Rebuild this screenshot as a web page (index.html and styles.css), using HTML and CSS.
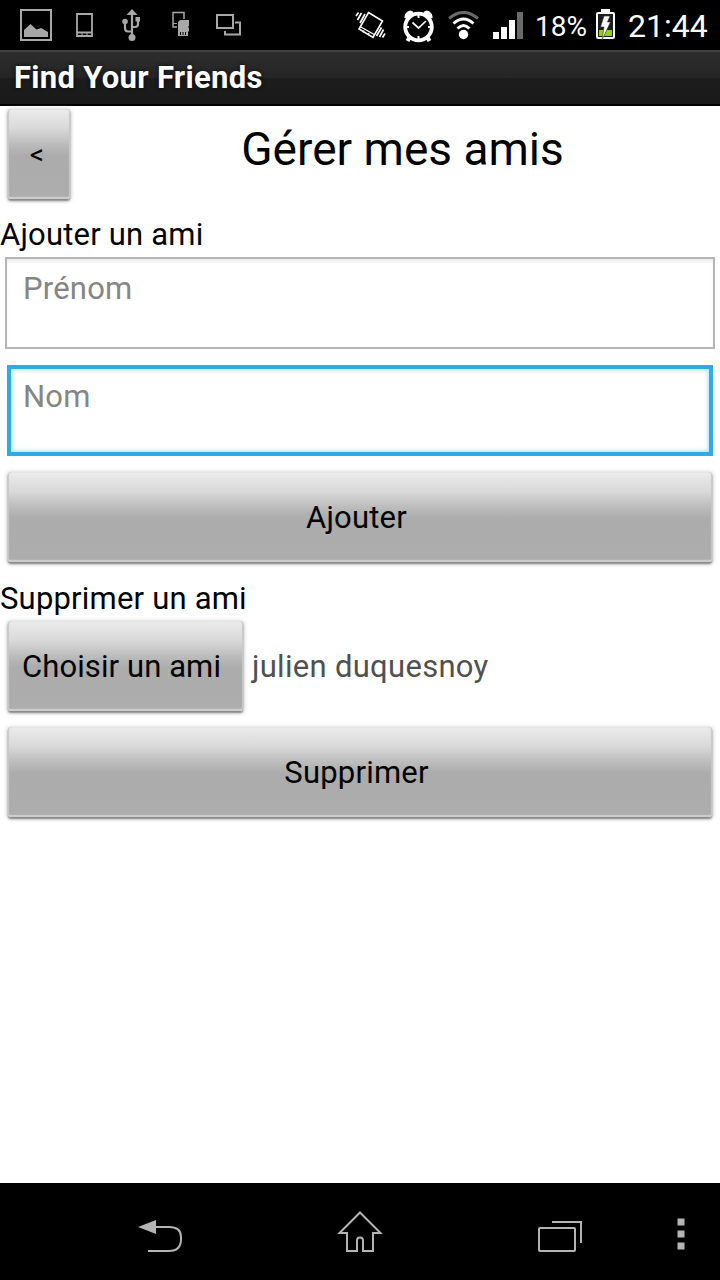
FILE: index.html
```
<!DOCTYPE html>
<html lang="fr">
<head>
    <meta charset="UTF-8">
    <meta name="viewport" content="width=device-width, initial-scale=1.0">
    <title>Find Your Friends</title>
    <link rel="stylesheet" href="styles.css">
</head>
<body>
    <div class="status-bar">
        <div class="notifications">
            <svg width="32" height="32" viewBox="0 0 32 32">
                <rect x="1" y="1" width="30" height="30" fill="none" stroke="#a8a8a8" stroke-width="2"/>
                <path d="M4 28V21L10.500 15L16.500 20.500L21 19L28 23V28Z" fill="#a8a8a8"/>
            </svg>
            <svg class="icon-phone" width="17" height="24" viewBox="0 0 17 24">
                <path d="M1 1H16V23H1ZM1 19.500H16" fill="none" stroke="#a8a8a8" stroke-width="1.800"/>
                <path d="M6 20V23M11 20V23" stroke="#a8a8a8"/>
            </svg>
            <svg class="icon-usb" width="19" height="33" viewBox="0 0 19 33">
                <path d="M10 6V28M3 13V19Q3 22.500 6 22.500H10M16 10V15Q16 18 13 18H10" fill="none" stroke="#a8a8a8" stroke-width="2.200"/>
                <path d="M4.500 6L10 0L15.500 6Z" fill="#a8a8a8"/>
                <circle cx="10" cy="28.500" r="3.500" fill="#a8a8a8"/>
                <circle cx="3" cy="12.500" r="2.800" fill="#a8a8a8"/>
                <rect x="13.500" y="8" width="4.500" height="4.500" fill="#a8a8a8"/>
            </svg>
            <svg class="icon-card" width="18" height="26" viewBox="0 0 18 26">
                <path d="M5 16H1V1.500H12V8" fill="none" stroke="#a8a8a8" stroke-width="1.500"/>
                <path d="M1 12.500H5" stroke="#a8a8a8"/>
                <path d="M8 9H17V15L16 16L17 17V20L16 21V25H6V11Z" fill="#a8a8a8"/>
                <path d="M8.500 21V24M11 21V24M13.500 21V24" stroke="#000"/>
            </svg>
            <svg class="icon-screens" width="25" height="22" viewBox="0 0 25 22">
                <path d="M1 1H17V14H1ZM19 8.500H24V20.500H9V17" fill="none" stroke="#a8a8a8" stroke-width="2"/>
            </svg>
        </div>
        <div class="system">
            <svg class="icon-vibrate" width="31" height="28" viewBox="0 0 31 28">
                <path d="M13.500 1.500L27.500 10L18 26.500L4 18Z" fill="none" stroke="#fff" stroke-width="1.600"/>
                <path d="M5 15.500L20 24M9 19.500L8 21.500M14 22L13 24" stroke="#fff" stroke-width="1.300"/>
                <path d="M1 5L3.500 1.500M2.500 9L6.500 2M5 12L10 3M30 22.500L27.500 26.500M28.500 18.500L24.500 26M26.500 16.500L21.500 25" stroke="#fff" stroke-width="1.700"/>
            </svg>
            <svg class="icon-alarm" width="31" height="33" viewBox="0 0 31 33">
                <path d="M1.500 8Q1 4 4 2Q7 -1 10.500 2L5 9ZM29.500 8Q30 4 27 2Q24 -1 20.500 2L26 9Z" fill="#fff"/>
                <path d="M6.500 27.500L4.500 31M24.500 27.500L26.500 31" stroke="#fff" stroke-width="4"/>
                <circle cx="15.500" cy="17" r="13.300" fill="#000" stroke="#fff" stroke-width="3.800"/>
                <path d="M15.500 5V8M15.500 26V29M3 17H6M25 17H28" stroke="#fff" stroke-width="2"/>
                <path d="M9.500 12.500L15.500 18L23 11" fill="none" stroke="#fff" stroke-width="1.700"/>
            </svg>
            <svg class="icon-wifi" width="31" height="29" viewBox="0 0 31 29">
                <path d="M1 7.500Q15.500 -4.500 30 7.500" fill="none" stroke="#6a6a6a" stroke-width="3"/>
                <path d="M5.500 12.500Q15.500 3.500 25.500 12.500M9.500 17.500Q15.500 11.500 21.500 17.500" fill="none" stroke="#fff" stroke-width="3"/>
                <circle cx="15.500" cy="23.500" r="4.700" fill="#fff"/>
            </svg>
            <svg class="icon-signal" width="30" height="27" viewBox="0 0 30 27">
                <path d="M0 20H6V27H0ZM8 15H14V27H8ZM16 8H22V27H16Z" fill="#fff"/>
                <path d="M24 0H30V27H24Z" fill="#6a6a6a"/>
            </svg>
            <span class="percent">18%</span>
            <svg class="icon-battery" width="19" height="32" viewBox="0 0 19 32">
                <path d="M5 0H14V4H5Z" fill="#fff"/>
                <rect x="1" y="4" width="17" height="25" rx="1" fill="#1c1c1c" stroke="#fff" stroke-width="2"/>
                <path d="M3 21H16V27H3Z" fill="#8fd400"/>
                <path d="M8 7H14L11.500 13H14.500L6 31L8 18H4.500Z" fill="#fff" stroke="#333" stroke-width="0.600"/>
            </svg>
            <span class="clock">21:44</span>
        </div>
    </div>

    <div class="title-bar">Find Your Friends</div>

    <div class="content">
        <div class="screen-header">
            <button class="button back">&lt;</button>
            <h1>Gérer mes amis</h1>
        </div>

        <p class="label">Ajouter un ami</p>
        <input class="field" type="text" placeholder="Prénom">
        <input class="field focused" type="text" placeholder="Nom">
        <button class="button add">Ajouter</button>

        <p class="label">Supprimer un ami</p>
        <div class="friend-row">
            <button class="button choose">Choisir un ami</button>
            <span class="friend-name">julien duquesnoy</span>
        </div>
        <button class="button remove">Supprimer</button>
    </div>

    <div class="nav-bar">
        <svg class="nav-back" width="45" height="34" viewBox="0 0 45 34">
            <path d="M17 8H31Q43 8 43 18V20Q43 32 31 32H10" fill="none" stroke="#b4b4b4" stroke-width="2"/>
            <path d="M0 8L18 1V15Z" fill="#b4b4b4"/>
        </svg>
        <svg class="nav-home" width="46" height="43" viewBox="0 0 46 43">
            <path d="M23 2.500L43.500 23H36V41H26V30.500Q26 27.500 23 27.500Q20 27.500 20 30.500V41H10V23H2.500Z" fill="none" stroke="#b4b4b4" stroke-width="2"/>
        </svg>
        <svg class="nav-recent" width="44" height="31" viewBox="0 0 44 31">
            <rect x="1" y="7" width="36" height="23" rx="1" fill="none" stroke="#b4b4b4" stroke-width="2"/>
            <path d="M14 1H43V22" fill="none" stroke="#b4b4b4" stroke-width="2"/>
        </svg>
        <svg class="nav-menu" width="8" height="32" viewBox="0 0 8 32">
            <path d="M0.500 0.500H7.500V7.500H0.500ZM0.500 12.500H7.500V19.500H0.500ZM0.500 24.500H7.500V31.500H0.500Z" fill="#b4b4b4"/>
        </svg>
    </div>
</body>
</html>
```
FILE: styles.css
```
* {
    box-sizing: border-box;
}
body {
    margin: 0;
    height: 1280px;
    display: flex;
    flex-direction: column;
    font-family: Roboto, sans-serif;
    font-size: 31px;
    background: #fff;
    color: #000;
    overflow: hidden;
}
svg {
    display: block;
    flex: none;
}
.status-bar {
    height: 50px;
    display: flex;
    justify-content: space-between;
    background: #000;
    color: #fff;
}
.notifications,
.system {
    display: flex;
    align-items: center;
}
.notifications {
    padding-left: 20px;
}
.icon-phone {
    margin-left: 24px;
}
.icon-usb {
    margin-left: 29px;
}
.icon-card {
    margin-left: 31px;
    margin-top: -3px;
}
.icon-screens {
    margin-left: 26px;
}
.system {
    padding-right: 12px;
}
.icon-alarm {
    margin-left: 17px;
    margin-top: 2px;
}
.icon-wifi {
    margin-left: 14px;
}
.icon-signal {
    margin-left: 14px;
}
.percent {
    width: 51px;
    margin-left: 12px;
    font-size: 28px;
    margin-top: 3px;
}
.icon-battery {
    margin-left: 10px;
}
.clock {
    width: 80px;
    margin-left: 13px;
    margin-top: 2px;
    font-size: 32px;
    white-space: nowrap;
}
.title-bar {
    height: 56px;
    padding-left: 14px;
    background: linear-gradient(#2d2d2d 0%, #252525 50%, #1c1c1c 51%, #1a1a1a 100%);
    border-top: 2px solid #414141;
    border-bottom: 2px solid #000;
    color: #fff;
    font-size: 31px;
    font-weight: bold;
    line-height: 52px;
    letter-spacing: 0.3px;
    text-shadow: 0 0 4px rgba(0, 0, 0, 0.8);
}
.content {
    flex: 1;
    display: flex;
    flex-direction: column;
    padding-top: 3px;
}
.screen-header {
    height: 108px;
    display: flex;
    align-items: flex-start;
}
h1 {
    flex: 1;
    margin: 12px 0 0;
    padding-left: 15px;
    font-size: 46px;
    font-weight: normal;
    line-height: 56px;
    text-align: center;
}
.label {
    margin: 0;
    height: 40px;
    line-height: 36px;
    letter-spacing: 0.2px;
}
.field {
    display: block;
    height: 92px;
    margin: 0 5px;
    padding: 0 16px 30px;
    border: 2px solid #b5b5b5;
    border-radius: 0;
    background: #fff;
    box-shadow: inset 0 3px 3px #eee;
    color: #000;
    font-family: inherit;
    font-size: 31px;
    letter-spacing: 0.2px;
    outline: none;
}
.field::placeholder {
    color: #858585;
    opacity: 1;
}
.field.focused {
    height: 91px;
    margin: 16px 7px;
    padding: 0 12px 29px;
    border: 4px solid #2dace3;
    box-shadow: inset 0 0 4px 1px #a5dcf3;
}
.button {
    display: block;
    height: 90px;
    margin: 0 8px;
    padding: 3px 0 0;
    border: 0;
    border-bottom: 2px solid #ccc;
    border-radius: 3px;
    background: linear-gradient(#ececec 0%, #d9d9d9 22%, #b9b9b9 42%, #acacac 53%, #adadad 100%);
    box-shadow: inset 1px 0 1px #c8c8c8, inset -1px 0 1px #c8c8c8, 0 2px 2px #888, 0 1px 4px 1px #ccc;
    color: #000;
    font-family: inherit;
    font-size: 31px;
    letter-spacing: 0.2px;
}
.back {
    width: 62px;
    margin-right: 0;
    padding-right: 4px;
    font-size: 28px;
}
.add {
    margin-bottom: 19px;
    padding-right: 7px;
}
.friend-row {
    display: flex;
    align-items: center;
    margin-bottom: 16px;
}
.choose {
    width: 235px;
    padding-right: 8px;
    letter-spacing: 0.1px;
}
.friend-name {
    padding-left: 1px;
    color: #505050;
    letter-spacing: 0.3px;
}
.remove {
    padding-right: 7px;
}
.nav-bar {
    height: 97px;
    display: flex;
    align-items: flex-start;
    background: #000;
}
.nav-back {
    margin: 36px 0 0 138px;
}
.nav-home {
    margin: 27px 0 0 154px;
}
.nav-recent {
    margin: 38px 0 0 155px;
}
.nav-menu {
    margin: 35px 0 0 95px;
}
```
